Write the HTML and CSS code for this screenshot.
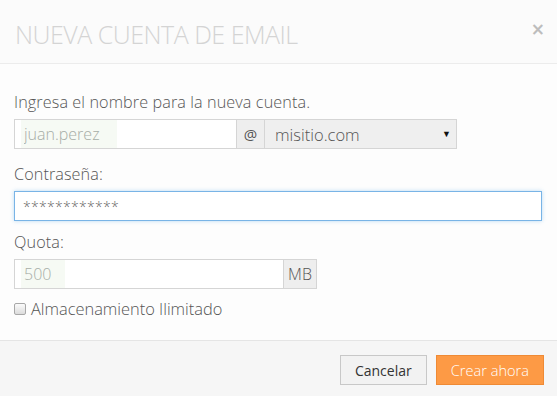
FILE: index.html
```html
<!DOCTYPE html>
<html>
<head>
  <meta charset="UTF-8">
  <title>Nueva cuenta de email</title>
  <link rel="stylesheet" href="styles.css">
</head>
<body>

  <div class="modal">
    <div class="modal-header">
      <h3 class="modal-title">NUEVA CUENTA DE EMAIL</h3>
      <button class="close">&times;</button>
    </div>

    <div class="modal-body">
      <label class="field-label">Ingresa el nombre para la nueva cuenta.</label>
      <div class="input-group">
        <input type="text" class="form-control user-input" value="juan.perez">
        <span class="addon">@</span>
        <div class="select-box">
          <span>misitio.com</span>
          <span class="caret">&#9660;</span>
        </div>
      </div>

      <label class="field-label">Contraseña:</label>
      <input type="text" class="form-control focused" value="************">

      <label class="field-label">Quota:</label>
      <div class="input-group quota">
        <input type="text" class="form-control user-input" value="500">
        <span class="addon">MB</span>
      </div>

      <label class="check">
        <input type="checkbox">
        Almacenamiento Ilimitado
      </label>
    </div>

    <div class="modal-footer">
      <button class="btn">Cancelar</button>
      <button class="btn btn-primary">Crear ahora</button>
    </div>
  </div>

</body>
</html>
```

FILE: styles.css
```css
body {
  margin: 0;
  font-family: 'Open Sans', sans-serif;
  font-weight: 300;
  color: #555;
  background: #fff;
}

.modal {
  width: 557px;
  height: 396px;
  overflow: hidden;
  display: flex;
  flex-direction: column;
}

.modal-header {
  height: 64px;
  box-sizing: border-box;
  border-bottom: 1px solid #ececec;
  background: #fbfbfb;
  display: flex;
  align-items: center;
  justify-content: space-between;
  padding: 0 12px 0 15px;
}

.modal-title {
  margin: 0;
  font-size: 25px;
  font-weight: 300;
  color: #d4d4d4;
  letter-spacing: -0.5px;
  padding-top: 4px;
}

.close {
  border: none;
  background: none;
  padding: 0;
  font-family: 'DejaVu Sans', sans-serif;
  font-size: 17px;
  font-weight: bold;
  color: #bdbdbd;
  line-height: 1;
  margin-top: -4px;
}

.modal-body {
  flex: 1;
  padding: 28px 15px 0 14px;
  background: #fdfdfd;
}

.field-label {
  display: block;
  font-size: 16.2px;
  line-height: 20px;
  margin-bottom: 7px;
  color: #555;
  letter-spacing: 0.1px;
}

.form-control {
  display: block;
  box-sizing: border-box;
  width: 100%;
  height: 30px;
  border: 1px solid #d5d5d5;
  padding: 0 9px;
  font-family: 'Open Sans', sans-serif;
  font-weight: 300;
  font-size: 16px;
  color: #555;
  background: #fff;
  margin-bottom: 15px;
  outline: none;
}

.user-input {
  color: #a6ada6;
  background: linear-gradient(to right, #fff 6px, #f6faf4 6px, #f6faf4 102px, #fff 102px);
}

.quota .user-input {
  background: linear-gradient(to right, #fff 6px, #f6faf4 6px, #f6faf4 50px, #fff 50px);
}

.focused {
  border-color: #79b4e6;
  box-shadow: 0 0 4px rgba(102, 175, 233, .45);
  color: #666;
  font-size: 14px;
  letter-spacing: 0.3px;
  padding-left: 8px;
  margin-bottom: 11px;
}

.input-group {
  display: flex;
  width: 443px;
  margin-bottom: 15px;
}

.input-group .form-control {
  margin-bottom: 0;
  width: 223px;
  flex: none;
}

.addon {
  box-sizing: border-box;
  height: 30px;
  border: 1px solid #d5d5d5;
  border-left: none;
  background: #eee;
  font-size: 15px;
  font-weight: 400;
  color: #555;
  display: flex;
  align-items: center;
  justify-content: center;
  width: 28px;
}

.select-box {
  flex: 1;
  box-sizing: border-box;
  height: 30px;
  border: 1px solid #d5d5d5;
  border-left: none;
  background: #efefef;
  display: flex;
  align-items: center;
  justify-content: space-between;
  padding: 0 5px 0 10px;
  font-size: 16.5px;
  color: #555;
}

.caret {
  font-family: 'DejaVu Sans', sans-serif;
  font-size: 9px;
  color: #111;
}

.quota {
  width: 303px;
  margin-bottom: 10px;
}

.quota .form-control {
  width: 270px;
}

.quota .addon {
  width: 33px;
  font-size: 16px;
  font-weight: 300;
}

.check {
  display: flex;
  align-items: center;
  font-size: 16.4px;
  line-height: 20px;
  color: #555;
}

.check input {
  appearance: none;
  box-sizing: border-box;
  margin: 0 5px 0 0;
  width: 12px;
  height: 12px;
  border: 1px solid #a8a8a8;
  border-radius: 2px;
  background: linear-gradient(#fbfbfb, #dcdcdc);
}

.modal-footer {
  height: 56px;
  box-sizing: border-box;
  border-top: 1px solid #e5e5e5;
  background: #f6f6f6;
  display: flex;
  justify-content: flex-end;
  align-items: flex-start;
  gap: 9px;
  padding: 14px 13px 0 0;
}

.btn {
  height: 30px;
  padding: 0 14px;
  border: 1px solid #c8c8c8;
  background: #f2f2f2;
  font-family: 'Open Sans', sans-serif;
  font-weight: 400;
  font-size: 14px;
  color: #333;
}

.btn-primary {
  background: #fd9a45;
  border-color: #ef8a35;
  color: #fff;
  font-weight: 300;
  font-size: 14.6px;
  padding: 0 14px;
}
```
